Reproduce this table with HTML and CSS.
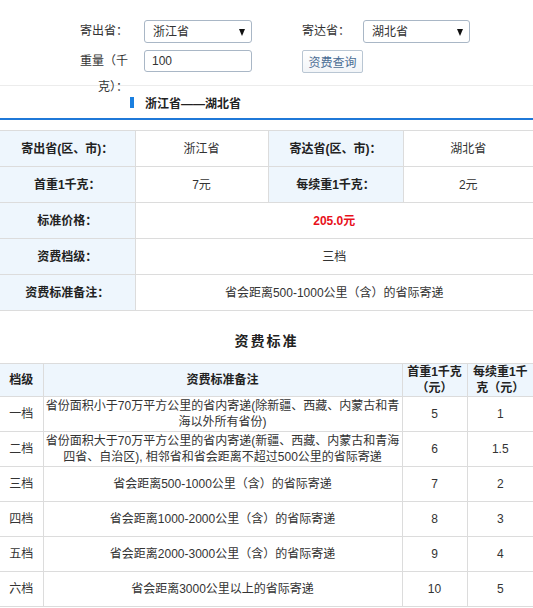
FILE: index.html
```html
<!DOCTYPE html>
<html lang="zh-CN">
<head>
<meta charset="utf-8">
<title>资费查询</title>
<link rel="stylesheet" href="styles.css">
</head>
<body>
<div class="query">
  <div class="query-row">
    <label class="q-label">寄出省：</label>
    <div class="select-wrap w1">
      <select class="q-select"><option>浙江省</option></select>
    </div>
    <label class="q-label gap-left">寄达省：</label>
    <div class="select-wrap w2">
      <select class="q-select"><option>湖北省</option></select>
    </div>
  </div>
  <div class="query-row second">
    <label class="q-label">重量（千克）：</label>
    <input class="q-input w1" type="text" value="100">
    <button class="q-btn gap-left" type="button">资费查询</button>
  </div>
</div>

<div class="route">
  <span class="route-mark"></span>
  <span class="route-text">浙江省——湖北省</span>
</div>

<table class="result">
  <colgroup><col class="c135"><col class="c133"><col class="c135"><col class="c130"></colgroup>
  <tr>
    <th>寄出省(区、市)：</th><td>浙江省</td>
    <th>寄达省(区、市)：</th><td>湖北省</td>
  </tr>
  <tr>
    <th>首重1千克：</th><td>7元</td>
    <th>每续重1千克：</th><td>2元</td>
  </tr>
  <tr>
    <th>标准价格：</th><td colspan="3" class="price">205.0元</td>
  </tr>
  <tr>
    <th>资费档级：</th><td colspan="3">三档</td>
  </tr>
  <tr>
    <th>资费标准备注：</th><td colspan="3">省会距离500-1000公里（含）的省际寄递</td>
  </tr>
</table>

<h3 class="std-title">资费标准</h3>

<table class="std">
  <colgroup><col class="c43"><col class="c359"><col class="c65"><col class="c66"></colgroup>
  <tr class="head">
    <th>档级</th><th>资费标准备注</th><th>首重1千克（元）</th><th>每续重1千克（元）</th>
  </tr>
  <tr>
    <td>一档</td>
    <td class="note">省份面积小于70万平方公里的省内寄递(除新疆、西藏、内蒙古和青<br>海以外所有省份)</td>
    <td>5</td><td>1</td>
  </tr>
  <tr>
    <td>二档</td>
    <td class="note">省份面积大于70万平方公里的省内寄递(新疆、西藏、内蒙古和青海<br>四省、自治区), 相邻省和省会距离不超过500公里的省际寄递</td>
    <td>6</td><td>1.5</td>
  </tr>
  <tr>
    <td>三档</td><td class="note">省会距离500-1000公里（含）的省际寄递</td><td>7</td><td>2</td>
  </tr>
  <tr>
    <td>四档</td><td class="note">省会距离1000-2000公里（含）的省际寄递</td><td>8</td><td>3</td>
  </tr>
  <tr>
    <td>五档</td><td class="note">省会距离2000-3000公里（含）的省际寄递</td><td>9</td><td>4</td>
  </tr>
  <tr>
    <td>六档</td><td class="note">省会距离3000公里以上的省际寄递</td><td>10</td><td>5</td>
  </tr>
</table>
</body>
</html>
```
FILE: styles.css
```css
* { box-sizing: border-box; }

body {
  margin: 0;
  font-family: "Liberation Sans", "Noto Sans CJK SC", sans-serif;
  font-size: 12px;
  color: #333;
  background: #fff;
}

/* query form */
.query {
  padding: 20px 0 11px 80px;
  border-bottom: 1px solid #ececec;
  height: 86px;
}
.query-row {
  display: flex;
  align-items: flex-start;
  height: 23px;
}
.query-row.second { margin-top: 7px; }

.q-label {
  width: 48px;
  margin-right: 16px;
  line-height: 26px;
  margin-top: -2px;
  text-align: right;
  color: #333;
  flex-shrink: 0;
}
.gap-left { margin-left: 50px; }
.q-label.gap-left { margin-right: 13px; }

.select-wrap {
  position: relative;
  height: 23px;
}
.w1 { width: 108px; }
.w2 { width: 107px; }
.select-wrap::after {
  content: "";
  position: absolute;
  right: 7px;
  top: 9px;
  border-left: 3.5px solid transparent;
  border-right: 3.5px solid transparent;
  border-top: 7px solid #111;
  pointer-events: none;
}
.q-select {
  appearance: none;
  -webkit-appearance: none;
  width: 100%;
  height: 23px;
  padding: 0 0 0 8px;
  border: 1px solid #a9b7c6;
  border-radius: 3px;
  background: #fff;
  font: inherit;
  color: #333;
}
.q-input {
  height: 22px;
  padding: 0 7px;
  border: 1px solid #a9b7c6;
  border-radius: 3px;
  font: inherit;
  color: #333;
}
.q-btn {
  width: 61px;
  height: 23px;
  padding: 0;
  border: 1px solid #b9c6d3;
  border-radius: 2px;
  background: linear-gradient(#ffffff, #f2f5f8);
  font: inherit;
  color: #4b6d94;
}

/* route heading */
.route {
  display: flex;
  align-items: center;
  height: 34px;
  padding: 0 0 0 130px;
  border-bottom: 2px solid #1f78d8;
}
.route-mark {
  width: 4px;
  height: 11px;
  background: #1a7fe0;
  margin-right: 11px;
}
.route-text {
  font-weight: bold;
  color: #222;
}

/* tables */
table {
  border-collapse: collapse;
  width: 533px;
  table-layout: fixed;
}
.c135 { width: 135px; }
.c133 { width: 133px; }
.c130 { width: 130px; }
.c43 { width: 43px; }
.c359 { width: 359px; }
.c65 { width: 65px; }
.c66 { width: 66px; }

th, td {
  border: 1px solid #dcdcdc;
  text-align: center;
  vertical-align: middle;
  line-height: 16px;
  padding: 0 2px;
}
tr > :first-child { border-left: none; }
tr > :last-child { border-right: none; }

th {
  background: #eef6fd;
  font-weight: bold;
  color: #222;
}

.result { margin-top: 10px; }
.result th, .result td { height: 36px; }
.result .price { color: #e8101a; font-weight: bold; }

.std-title {
  margin: 20px 0 12px;
  font-size: 14px;
  line-height: 20px;
  letter-spacing: 2px;
  text-align: center;
  color: #222;
}

.std th { height: 33px; padding: 0 1px; }
.std td { height: 35px; }
.std td.note { padding: 0 1px; }
```
